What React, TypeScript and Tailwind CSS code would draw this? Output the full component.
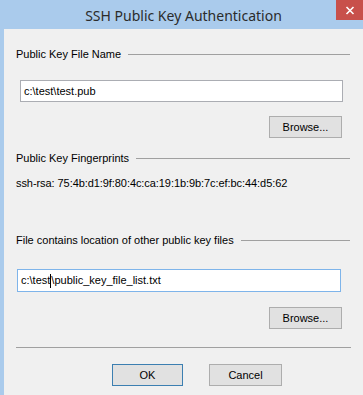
import React from "react";

const ui = { fontFamily: '"Liberation Sans", Arial, sans-serif' };

function GroupLabel({ text }: { text: string }) {
  return (
    <div className="flex items-center h-[14px] text-[11px] leading-[14px] text-black" style={ui}>
      <span className="whitespace-nowrap">{text}</span>
      <div className="flex-1 h-px bg-[#a0a0a0] ml-[7px] mt-[1px]" />
    </div>
  );
}

function Btn({ label, def, w }: { label: string; def?: boolean; w: string }) {
  return (
    <div
      className={`h-[22px] ${w} flex items-center justify-center text-[11px] text-black bg-[#e1e1e1] border ${
        def ? "border-[#3c7fb1]" : "border-[#adadad]"
      }`}
      style={ui}
    >
      {label}
    </div>
  );
}

export default function App() {
  return (
    <div className="w-[363px] h-[395px] flex flex-col bg-[#aacbec] overflow-hidden">
      <div className="relative h-[29px] flex items-center justify-center shrink-0">
        <span
          className="text-[14px] text-[#2b2b2b] mt-[1px] ml-[4px]"
          style={{ fontFamily: '"Noto Sans", "Open Sans", sans-serif' }}
        >
          SSH Public Key Authentication
        </span>
        <div className="absolute top-0 right-0 w-[27px] h-[20px] bg-[#c8504b] flex items-center justify-center">
          <svg width="10" height="9" viewBox="0 0 10 9">
            <path d="M1.5 1 L8.5 8 M8.5 1 L1.5 8" stroke="#ffffff" strokeWidth="1.6" />
          </svg>
        </div>
      </div>
      <div className="flex-1 ml-[4px] bg-[#f0f0f0] flex flex-col pl-[12px] pr-[13px] pt-[18px]">
        <GroupLabel text="Public Key File Name" />
        <div
          className="mt-[19px] ml-[4px] w-[323px] h-[22px] bg-white border border-[#abadb3] flex items-center pl-[3px] text-[11px] text-black"
          style={ui}
        >
          c:\test\test.pub
        </div>
        <div className="mt-[14px] self-end mr-[8px]">
          <Btn label="Browse..." w="w-[73px]" />
        </div>
        <div className="mt-[13px]">
          <GroupLabel text="Public Key Fingerprints" />
        </div>
        <div
          className="mt-[11px] h-[14px] text-[11px] leading-[14px] text-black whitespace-nowrap tracking-[-0.07px]"
          style={ui}
        >
          ssh-rsa: 75:4b:d1:9f:80:4c:ca:19:1b:9b:7c:ef:bc:44:d5:62
        </div>
        <div className="mt-[43px]">
          <GroupLabel text="File contains location of other public key files" />
        </div>
        <div
          className="mt-[22px] ml-[1px] w-[324px] h-[23px] bg-white border border-[#7eb4ea] flex items-center pl-[3px] text-[11px] text-black"
          style={ui}
        >
          <span>c:\test</span>
          <span className="inline-block w-px h-[14px] bg-black" />
          <span>\public_key_file_list.txt</span>
        </div>
        <div className="mt-[15px] self-end mr-[8px]">
          <Btn label="Browse..." w="w-[73px]" />
        </div>
        <div className="mt-[18px] h-px bg-[#a0a0a0] mr-[-1px]" />
        <div className="mt-[16px] flex ml-[96px] gap-[26px]">
          <Btn label="OK" def w="w-[71px]" />
          <Btn label="Cancel" w="w-[73px]" />
        </div>
      </div>
    </div>
  );
}
